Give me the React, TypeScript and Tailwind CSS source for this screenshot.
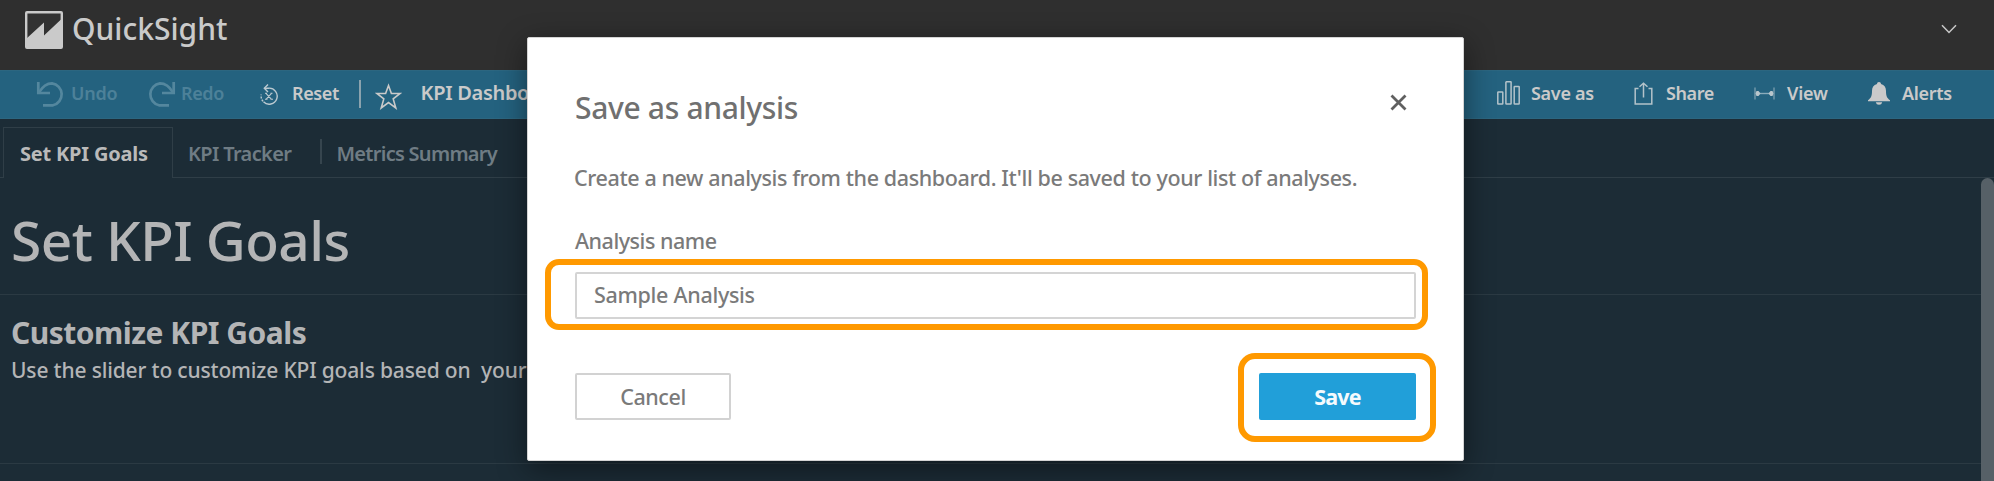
import type { ReactNode } from "react";

function LogoIcon() {
  return (
    <svg className="ml-[25px] mt-[11px] h-[38px] w-[38px] shrink-0" viewBox="0 0 38 38">
      <rect x="1.2" y="1.2" width="35.6" height="35.6" rx="0.8" fill="#323232" stroke="#cacaca" strokeWidth="2.4" />
      <path d="M1.500 27.500 19 11.500V24.500L36.500 8V37H1.500Z" fill="#cacaca" />
    </svg>
  );
}

function UndoIcon({ className }: { className: string }) {
  return (
    <svg className={className} viewBox="0 0 30 26" fill="none" stroke="#54879e" strokeWidth="2.7">
      <path d="M2.3 1V12H14" />
      <path d="M3 11.4C6.5 5.5 10.500 2.300 16 2.300A11.200 11.200 0 0 1 17 24.300H7" />
    </svg>
  );
}

function ResetIcon() {
  return (
    <svg className="ml-[35px] mt-[2px] h-[24px] w-[18px] shrink-0" viewBox="0 0 18 24" fill="none" stroke="#bccad1" strokeWidth="1.4">
      <path d="M4.500 5.200H8.500A8 8 0 1 1 3.500 18.800" />
      <path d="M3 18.300A8 8 0 0 1 1.300 11.500" strokeDasharray="2 1.200" />
      <path d="M8 1.500 4.300 5.200 8 9" />
      <path d="M6 10.300 11.500 16.300M11.500 10.300 6 16.300M5 16.300H7.500M10.500 16.300H13M5 10.300H7M10.500 10.300H12.500" strokeWidth="1.100" />
    </svg>
  );
}

function StarIcon() {
  return (
    <svg className="ml-[14px] mt-[2px] h-[27px] w-[27px] shrink-0" viewBox="0 0 27 27" fill="none" stroke="#cacaca" strokeWidth="1.600">
      <path d="M13.500 2.500 16.400 10.500H25.200L18.200 15.900 20.800 25 13.500 19.600 6.200 25 8.800 15.900 1.800 10.500H10.600Z" />
    </svg>
  );
}

function BarsIcon() {
  return (
    <svg className="h-[24px] w-[23px] shrink-0" viewBox="0 0 23 24" fill="none" stroke="#b4c3ca" strokeWidth="1.500">
      <rect x="0.800" y="11" width="5" height="12" rx="0.500" />
      <rect x="8.900" y="0.800" width="5.200" height="22.200" rx="0.500" />
      <rect x="17.200" y="5.500" width="5" height="17.500" rx="0.500" />
    </svg>
  );
}

function ShareIcon() {
  return (
    <svg className="ml-[39px] mt-[1px] h-[23px] w-[19px] shrink-0" viewBox="0 0 19 23" fill="none" stroke="#b4c3ca" strokeWidth="1.500">
      <path d="M4.500 6.500H1.200V22H17.800V6.500H14.500" />
      <path d="M9.500 15.500V2" />
      <path d="M5.500 4.800 9.500 1.200 13.500 4.800" />
    </svg>
  );
}

function ViewIcon() {
  return (
    <svg className="ml-[39px] mt-[6px] h-[13px] w-[21px] shrink-0" viewBox="0 0 21 13">
      <path d="M1 0.500V12.500M20 0.500V12.500" stroke="#6f97a9" strokeWidth="1.500" />
      <path d="M5 6.500H16" stroke="#8aabba" strokeWidth="1.400" />
      <path d="M1.500 6.500 2.500 4H4.500L6.500 6.500 4.500 9H2.500ZM19.500 6.500 18.500 4H16.500L14.500 6.500 16.500 9H18.500Z" fill="#b9c6cc" />
    </svg>
  );
}

function BellIcon() {
  return (
    <svg className="ml-[38px] mt-[1px] h-[23px] w-[22px] shrink-0" viewBox="0 0 22 23" fill="#cacaca">
      <path d="M11 0C12.200 0 13 0.800 13 2 16.500 3 18 5.500 18 9 18 14 19 16 22 18.200V19.300H0V18.200C3 16 4 14 4 9 4 5.500 5.500 3 9 2 9 0.800 9.800 0 11 0Z" />
      <path d="M7.800 20.300H14.200C13.800 22 12.600 22.800 11 22.800S8.200 22 7.800 20.300Z" />
    </svg>
  );
}

function BarText({ className, children }: { className: string; children: ReactNode }) {
  return <span className={`whitespace-pre text-[18px] leading-6 font-semibold ${className}`}>{children}</span>;
}

function Header() {
  return (
    <header className="flex h-[70px] items-start bg-[#2f2f2f]">
      <LogoIcon />
      <span className="ml-[9px] mt-[11px] text-[30px] leading-9 font-medium text-[#cacaca]">QuickSight</span>
      <svg className="mt-[24px] mr-[37px] ml-auto h-[10px] w-[16px]" viewBox="0 0 16 10" fill="none" stroke="#c8c8c8" strokeWidth="1.500">
        <path d="M1 1.200 8 8.500 15 1.200" />
      </svg>
    </header>
  );
}

function Toolbar() {
  return (
    <div className="flex h-[49px] items-start border-y border-[#2c6680] bg-[#24627f] pt-[10px]">
      <UndoIcon className="ml-[36px] h-[26px] w-[30px] shrink-0" />
      <BarText className="ml-[5px] w-[47px] tracking-[-0.200px] text-[#4d8199]">Undo</BarText>
      <UndoIcon className="ml-[28px] h-[26px] w-[30px] shrink-0 -scale-x-100" />
      <BarText className="ml-[5px] w-[44px] tracking-[-0.400px] text-[#4d8199]">Redo</BarText>
      <ResetIcon />
      <BarText className="ml-[14px] w-[48px] tracking-[-0.400px] text-[#cacaca]">Reset</BarText>
      <div className="ml-[19px] h-[28px] w-[1.500px] -mt-[1px] bg-[#8ba3ae]" />
      <StarIcon />
      <span className="ml-[19px] text-[20px] leading-6 font-semibold tracking-[-0.300px] whitespace-pre text-[#cacaca]">KPI Dashboard</span>
      <div className="mr-[41px] ml-auto flex items-start">
        <BarsIcon />
        <BarText className="ml-[11px] w-[64px] tracking-[-0.300px] text-[#cacaca]">Save as</BarText>
        <ShareIcon />
        <BarText className="ml-[13px] w-[49px] tracking-[-0.400px] text-[#cacaca]">Share</BarText>
        <ViewIcon />
        <BarText className="ml-[12px] w-[43px] tracking-[-0.200px] text-[#cacaca]">View</BarText>
        <BellIcon />
        <BarText className="ml-[12px] w-[51px] tracking-[-0.300px] text-[#cacaca]">Alerts</BarText>
      </div>
    </div>
  );
}

function Tabs() {
  return (
    <nav className="flex h-[59px] shrink-0 items-end text-[20px] leading-6 font-semibold whitespace-nowrap text-[#6f7c84]">
      <div className="h-full w-[3px] border-b border-[#2f3e47]" />
      <div className="h-[51px] w-[170px] border-x border-t border-[#2f3e47] pt-[14px] pl-[16px] font-bold tracking-[-0.200px] text-[#bababa]">
        Set KPI Goals
      </div>
      <div className="flex h-[51px] flex-1 border-b border-[#2f3e47] pt-[15px]">
        <span className="ml-[15px] w-[104px] tracking-[-0.650px]">KPI Tracker</span>
        <div className="-mt-[3px] ml-[28px] h-[25px] w-[1.500px] bg-[#36454e]" />
        <span className="ml-[15px] tracking-[-0.720px]">Metrics Summary</span>
      </div>
    </nav>
  );
}

function Sheet() {
  return (
    <div className="flex min-h-0 flex-1">
      <main className="flex min-w-0 flex-1 flex-col whitespace-pre text-[#b4b5b6]">
        <section className="h-[117px] shrink-0 border-b border-[#2b3a43] pt-[32px] pl-[11px] text-[55px] leading-[60px] font-medium tracking-[-0.550px]">Set KPI Goals</section>
        <section className="h-[169px] shrink-0 border-b border-[#2b3a43] pl-[11px]">
          <h2 className="pt-[20px] text-[30px] leading-9 font-bold tracking-[-0.500px]">Customize KPI Goals</h2>
          <p className="pt-[5px] text-[21px] leading-7 font-medium tracking-[-0.160px]">Use the slider to customize KPI goals based on  your needs</p>
        </section>
      </main>
      <div className="w-[13px] rounded-t-full bg-[#566067]" />
    </div>
  );
}

function SaveDialog() {
  return (
    <div
      role="dialog"
      className="absolute top-[37px] left-[527px] flex h-[424px] w-[937px] flex-col rounded-[2px] border border-[#d4d4d4] bg-white px-[47px] text-[21.500px] leading-7 font-medium whitespace-nowrap text-[#7a7a7a] shadow-[0_8px_30px_rgba(0,0,0,0.450)]"
    >
      <div className="flex items-start justify-between pt-[52px]">
        <h1 className="text-[30px] leading-9 tracking-[-0.330px] text-[#707070]">Save as analysis</h1>
        <svg className="mt-[4px] mr-[9px] h-[17px] w-[17px]" viewBox="0 0 17 17" fill="none" stroke="#606060" strokeWidth="2.800">
          <path d="M1.500 1.500 15.500 15.500M15.500 1.500 1.500 15.500" />
        </svg>
      </div>
      <p className="mt-[38px] -ml-px tracking-[-0.390px]">Create a new analysis from the dashboard. It'll be saved to your list of analyses.</p>
      <label className="mt-[35px] tracking-[-0.480px]">Analysis name</label>
      <div className="mt-[4px] -mr-[12px] -ml-[30px] flex h-[71px] shrink-0 items-center rounded-[14px] border-[6px] border-[#ff9900] pr-[6px] pl-[24px]">
        <div className="mt-px flex h-[47px] flex-1 items-center rounded-[2px] border-2 border-[#d4d4d4] pl-[17px] tracking-[-0.300px]">Sample Analysis</div>
      </div>
      <div className="-mr-[20px] mt-[23px] flex shrink-0 items-center justify-between">
        <button className="-mt-[2px] h-[47px] w-[156px] rounded-[2px] border-2 border-[#d2d2d2] tracking-[-0.400px]">Cancel</button>
        <div className="flex h-[89px] w-[198px] items-start rounded-[17px] border-[6px] border-[#ff9900] pt-[14px] pl-[15px]">
          <button className="h-[47px] w-[157px] rounded-[2px] bg-[#219fd9] font-bold tracking-[-0.800px] text-[#f4fafd]">Save</button>
        </div>
      </div>
    </div>
  );
}

export default function App() {
  return (
    <div className="relative flex h-[481px] w-full flex-col overflow-hidden bg-[#1c2c36] font-['Noto_Sans','Open_Sans',sans-serif]">
      <Header />
      <Toolbar />
      <Tabs />
      <Sheet />
      <SaveDialog />
    </div>
  );
}
